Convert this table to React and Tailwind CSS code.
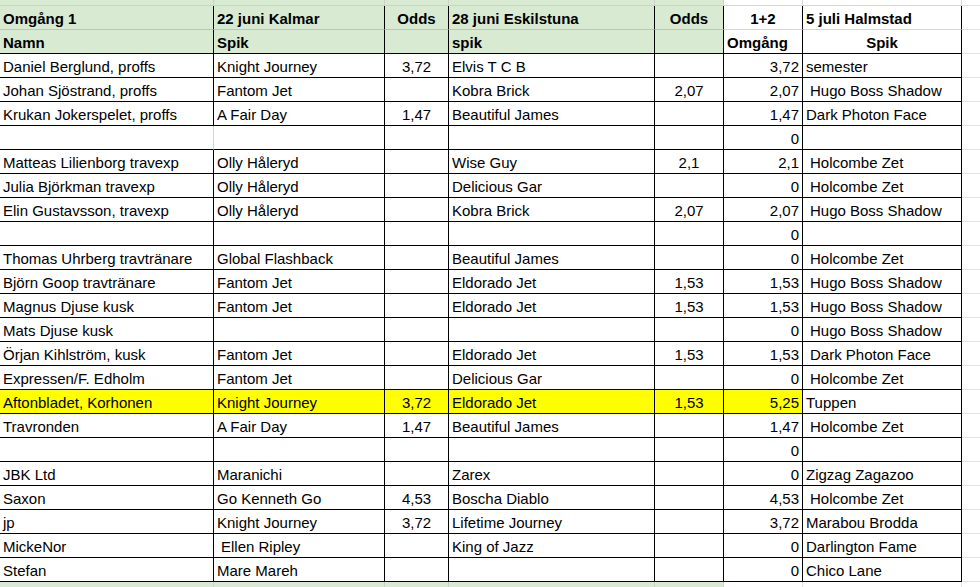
import React from "react";

const GRID = "grid grid-cols-[214px_171px_64px_206px_69px_79px_159px_1fr]";

const rows = [
  ["Daniel Berglund, proffs", "Knight Journey", "3,72", "Elvis T C B", "", "3,72", "semester"],
  ["Johan Sjöstrand, proffs", "Fantom Jet", "", "Kobra Brick", "2,07", "2,07", " Hugo Boss Shadow"],
  ["Krukan Jokerspelet, proffs", "A Fair Day", "1,47", "Beautiful James", "", "1,47", "Dark Photon Face"],
  ["", "", "", "", "", "0", "", "lightA"],
  ["Matteas Lilienborg travexp", "Olly Håleryd", "", "Wise Guy", "2,1", "2,1", " Holcombe Zet"],
  ["Julia Björkman travexp", "Olly Håleryd", "", "Delicious Gar", "", "0", " Holcombe Zet"],
  ["Elin Gustavsson, travexp", "Olly Håleryd", "", "Kobra Brick", "2,07", "2,07", " Hugo Boss Shadow"],
  ["", "", "", "", "", "0", ""],
  ["Thomas Uhrberg travtränare", "Global Flashback", "", "Beautiful James", "", "0", " Holcombe Zet"],
  ["Björn Goop travtränare", "Fantom Jet", "", "Eldorado Jet", "1,53", "1,53", " Hugo Boss Shadow"],
  ["Magnus Djuse kusk", "Fantom Jet", "", "Eldorado Jet", "1,53", "1,53", " Hugo Boss Shadow"],
  ["Mats Djuse kusk", "", "", "", "", "0", " Hugo Boss Shadow"],
  ["Örjan Kihlström, kusk", "Fantom Jet", "", "Eldorado Jet", "1,53", "1,53", " Dark Photon Face"],
  ["Expressen/F. Edholm", "Fantom Jet", "", "Delicious Gar", "", "0", " Holcombe Zet"],
  ["Aftonbladet, Korhonen", "Knight Journey", "3,72", "Eldorado Jet", "1,53", "5,25", "Tuppen", "yellow"],
  ["Travronden", "A Fair Day", "1,47", "Beautiful James", "", "1,47", " Holcombe Zet"],
  ["", "", "", "", "", "0", ""],
  ["JBK Ltd", "Maranichi", "", "Zarex", "", "0", "Zigzag Zagazoo"],
  ["Saxon", "Go Kenneth Go", "4,53", "Boscha Diablo", "", "4,53", " Holcombe Zet"],
  ["jp", "Knight Journey", "3,72", "Lifetime Journey", "", "3,72", "Marabou Brodda"],
  ["MickeNor", " Ellen Ripley", "", "King of Jazz", "", "0", "Darlington Fame"],
  ["Stefan", "Mare Mareh", "", "", "", "0", "Chico Lane"],
];

function Cell({ children, className = "" }) {
  const text = typeof children === "string" ? children : "";
  const indent = text.startsWith(" ");
  return (
    <div
      className={`h-[24px] border-b border-r border-black pt-[4px] leading-[18px] whitespace-nowrap overflow-hidden ${
        indent ? "pl-[7px]" : ""
      } ${className}`}
    >
      {indent ? text.slice(1) : children}
    </div>
  );
}

export default function App() {
  return (
    <div className="w-[980px] h-[587px] overflow-hidden bg-white text-black text-[15px] font-['Liberation_Sans',Arial,sans-serif]">
      {/* partial top row */}
      <div className={`${GRID} h-[6px]`}>
        <div className="bg-[#d9ead3] border-b border-r border-[#c9d3c6]" />
        <div className="bg-[#d9ead3] border-b border-r border-[#c9d3c6]" />
        <div className="bg-[#d9ead3] border-b border-r border-[#c9d3c6]" />
        <div className="bg-[#d9ead3] border-b border-r border-[#c9d3c6]" />
        <div className="bg-[#d9ead3] border-b border-r border-[#c9d3c6]" />
        <div className="bg-white border-b border-r border-[#d6d6d6]" />
        <div className="bg-white border-b border-r border-[#d6d6d6]" />
        <div className="bg-white border-b border-[#e2e2e2]" />
      </div>

      {/* header row 1 */}
      <div className={`${GRID} font-bold`}>
        <Cell className="bg-[#d9ead3] px-[3px] border-b-[#b9c7b4]">Omgång 1</Cell>
        <Cell className="bg-[#d9ead3] px-[3px] border-b-[#b9c7b4]">22 juni Kalmar</Cell>
        <Cell className="bg-[#d9ead3] text-center border-b-[#b9c7b4]">Odds</Cell>
        <Cell className="bg-[#d9ead3] px-[3px] border-b-[#b9c7b4]">28 juni Eskilstuna</Cell>
        <Cell className="bg-[#d9ead3] text-center border-b-[#b9c7b4]">Odds</Cell>
        <Cell className="bg-white text-center border-b-[#d6d6d6]">1+2</Cell>
        <Cell className="bg-white px-[3px] border-b-[#d6d6d6]">5 juli Halmstad</Cell>
        <div className="h-[24px] border-b border-[#e2e2e2]" />
      </div>

      {/* header row 2 */}
      <div className={`${GRID} font-bold`}>
        <Cell className="bg-[#d9ead3] px-[3px]">Namn</Cell>
        <Cell className="bg-[#d9ead3] px-[3px]">Spik</Cell>
        <Cell className="bg-[#d9ead3]"></Cell>
        <Cell className="bg-[#d9ead3] px-[3px]">spik</Cell>
        <Cell className="bg-[#d9ead3]"></Cell>
        <Cell className="bg-white px-[3px]">Omgång</Cell>
        <Cell className="bg-white text-center">Spik</Cell>
        <div className="h-[24px] border-b border-[#e2e2e2]" />
      </div>

      {rows.map((r, i) => {
        const yellow = r[7] === "yellow";
        const lightA = r[7] === "lightA";
        const bg = yellow ? "bg-[#ffff00]" : "bg-white";
        return (
          <div key={i} className={GRID}>
            <Cell className={`${bg} px-[3px] ${lightA ? "border-r-[#d6d6d6]" : ""}`}>{r[0]}</Cell>
            <Cell className={`${bg} px-[3px]`}>{r[1]}</Cell>
            <Cell className={`${bg} text-center`}>{r[2]}</Cell>
            <Cell className={`${bg} px-[3px]`}>{r[3]}</Cell>
            <Cell className={`${bg} text-center`}>{r[4]}</Cell>
            <Cell className={`${bg} text-right pr-[3px]`}>{r[5]}</Cell>
            <Cell className="bg-white px-[3px]">{r[6]}</Cell>
            <div className="h-[24px] border-b border-[#e2e2e2]" />
          </div>
        );
      })}

      {/* partial bottom row */}
      <div className={`${GRID} h-[6px]`}>
        <div className="bg-[#d9ead3] border-r border-[#c9d3c6]" />
        <div className="bg-[#d9ead3] border-r border-[#c9d3c6]" />
        <div className="bg-[#d9ead3] border-r border-[#c9d3c6]" />
        <div className="bg-[#d9ead3] border-r border-[#c9d3c6]" />
        <div className="bg-[#d9ead3] border-r border-[#c9d3c6]" />
        <div className="bg-white border-r border-[#e2e2e2]" />
        <div className="bg-white border-r border-[#e2e2e2]" />
        <div className="bg-white" />
      </div>
    </div>
  );
}
